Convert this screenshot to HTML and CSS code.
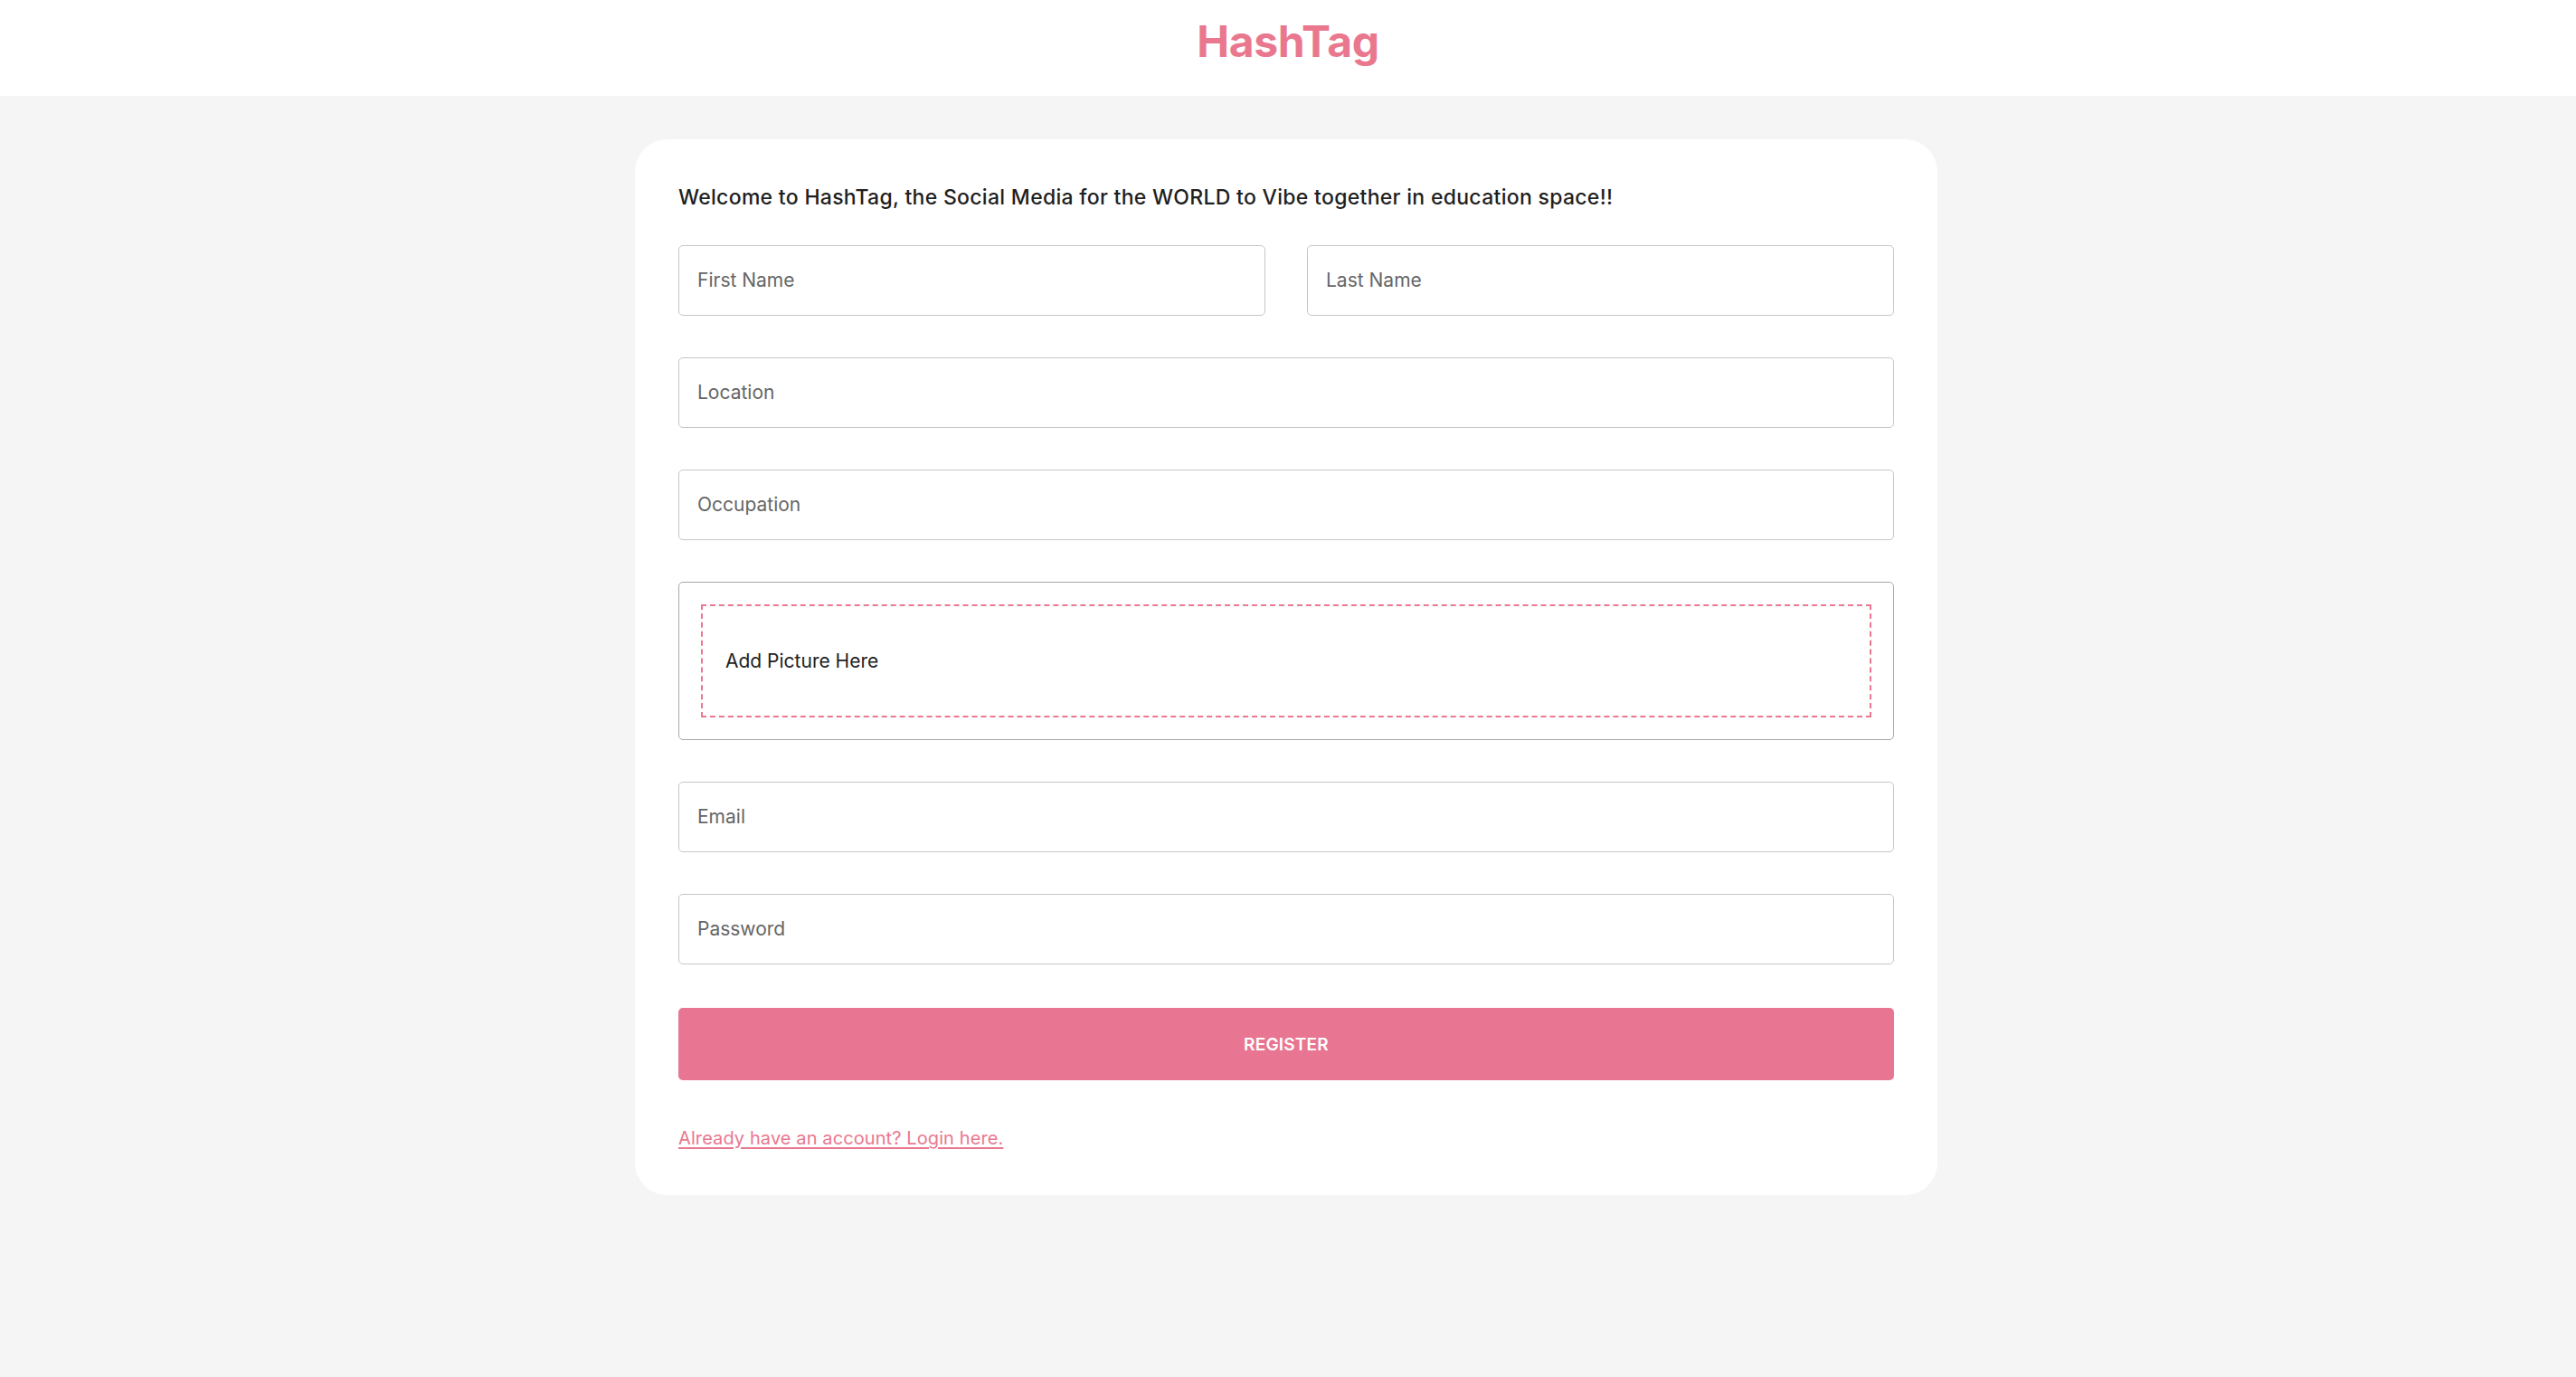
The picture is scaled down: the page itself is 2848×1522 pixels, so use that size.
FILE: index.html
```html
<!DOCTYPE html>
<html lang="en">
<head>
<meta charset="utf-8">
<title>HashTag</title>
<link rel="stylesheet" href="styles.css">
</head>
<body>
<header class="topbar">
  <h1 class="brand">HashTag</h1>
</header>
<main class="page">
  <section class="card">
    <p class="welcome">Welcome to HashTag, the Social Media for the WORLD to Vibe together in education space!!</p>
    <form class="form">
      <div class="row">
        <input class="field" type="text" placeholder="First Name">
        <input class="field" type="text" placeholder="Last Name">
      </div>
      <input class="field" type="text" placeholder="Location">
      <input class="field" type="text" placeholder="Occupation">
      <div class="picture">
        <div class="dropzone">Add Picture Here</div>
      </div>
      <input class="field" type="email" placeholder="Email">
      <input class="field" type="password" placeholder="Password">
      <button class="register" type="button">REGISTER</button>
    </form>
    <a class="login" href="#">Already have an account? Login here.</a>
  </section>
</main>
</body>
</html>
```

FILE: styles.css
```css
* { box-sizing: border-box; }

body {
  margin: 0;
  background: #f5f5f5;
  font-family: "Inter", "Roboto", sans-serif;
  color: #1f1f1f;
}

.topbar {
  height: 106px;
  background: #ffffff;
  display: flex;
  align-items: center;
  justify-content: center;
  padding-bottom: 14px;
}

.brand {
  margin: 0;
  font-size: 48px;
  font-weight: 700;
  color: #e9788f;
  line-height: 1;
  letter-spacing: -0.3px;
}

.page {
  padding: 48px 4px 60px 0;
}

.card {
  width: 1440px;
  margin: 0 auto;
  background: #ffffff;
  border-radius: 36px;
  padding: 48px;
}

.welcome {
  margin: 0 0 36px;
  font-size: 23px;
  line-height: 33px;
  font-weight: 500;
  letter-spacing: 0.3px;
  color: #1f1f1f;
}

.form {
  display: flex;
  flex-direction: column;
  gap: 46px;
}

.row {
  display: grid;
  grid-template-columns: 1fr 1fr;
  gap: 46px;
}

.field {
  display: block;
  width: 100%;
  height: 78px;
  border: 1px solid #c6c6c6;
  border-radius: 5px;
  padding: 0 20px 2px;
  font-family: inherit;
  font-size: 21px;
  color: #333;
  background: #fff;
  outline: none;
}

.field::placeholder {
  color: #666666;
  opacity: 1;
}

.picture {
  height: 175px;
  border: 1px solid #a8a8a8;
  border-radius: 5px;
  padding: 24px;
}

.dropzone {
  height: 100%;
  border: 2px dashed #ea7891;
  display: flex;
  align-items: center;
  padding: 0 25px;
  font-size: 21px;
  color: #222222;
}

.register {
  height: 80px;
  margin-top: 2px;
  border: none;
  border-radius: 5px;
  background: #e87692;
  color: #ffffff;
  font-family: inherit;
  font-size: 19px;
  font-weight: 600;
  letter-spacing: 0.2px;
  cursor: pointer;
}

.login {
  display: inline-block;
  margin-top: 49px;
  font-size: 20px;
  line-height: 30px;
  letter-spacing: 0.1px;
  color: #e9788f;
  text-decoration: underline;
  text-underline-offset: 3px;
}
```
